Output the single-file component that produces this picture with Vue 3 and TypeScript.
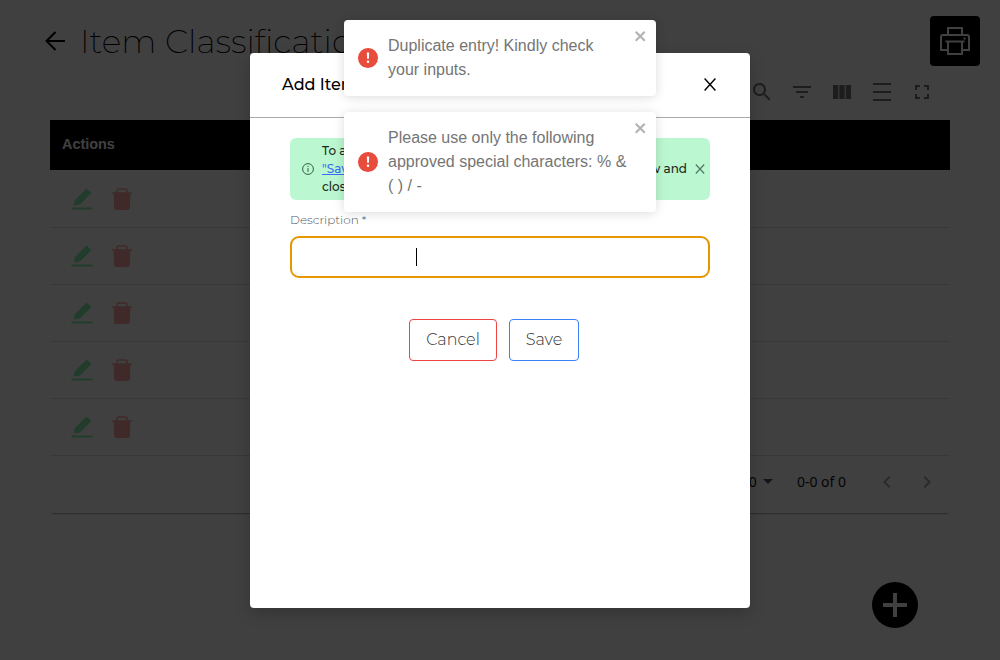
<script setup lang="ts">
interface Toast {
  id: number
  message: string
}

const rows: number[] = [1, 2, 3, 4, 5]

const toolbar: { name: string; path: string }[] = [
  {
    name: 'search',
    path: 'M15.5 14h-.79l-.28-.27C15.41 12.59 16 11.11 16 9.5 16 5.91 13.09 3 9.5 3S3 5.91 3 9.5 5.91 16 9.5 16c1.61 0 3.09-.59 4.23-1.57l.27.28v.79l5 4.99L20.49 19l-4.99-5zm-6 0C7.01 14 5 11.99 5 9.5S7.01 5 9.5 5 14 7.01 14 9.5 11.99 14 9.5 14z',
  },
  { name: 'filter', path: 'M10 18h4v-2h-4v2zM3 6v2h18V6H3zm3 7h12v-2H6v2z' },
  { name: 'columns', path: 'M3 5h5.3v14H3zM9.3 5h5.4v14H9.3zM15.7 5H21v14h-5.300z' },
  { name: 'density', path: 'M3 3h18v2H3zM3 11h18v2H3zM3 19h18v2H3z' },
  {
    name: 'fullscreen',
    path: 'M7 14H5v5h5v-2H7v-3zm-2-4h2V7h3V5H5v5zm12 7h-3v2h5v-5h-2v3zM14 5v2h3v3h2V5h-5z',
  },
]

const toasts: Toast[] = [
  { id: 1, message: 'Duplicate entry! Kindly check your inputs.' },
  { id: 2, message: 'Please use only the following approved special characters: % & ( ) / -' },
]
</script>

<template>
  <div class="app">
    <main class="page">
      <header class="page-head">
        <svg class="back" viewBox="0 0 20 20">
          <path d="M20 10H1.200M10.500 1L1.500 10L10.500 19" fill="none" stroke="#000" stroke-width="2" />
        </svg>
        <h1>Item Classifications</h1>
        <button class="print">
          <svg width="32" height="32" viewBox="0 0 32 32" fill="none" stroke="#fff" stroke-width="2">
            <path d="M9 10V3h14v7M8 25H2V12q0-2 2-2h24q2 0 2 2v13h-6M9 16.500h14V29H9zM6.500 16.500h19" />
            <path d="M24.500 13.500h2" />
          </svg>
        </button>
      </header>

      <div class="toolbar">
        <svg v-for="t in toolbar" :key="t.name" width="24" height="24" viewBox="0 0 24 24">
          <path :d="t.path" fill="#757575" />
        </svg>
      </div>

      <section class="table">
        <div class="thead">Actions</div>
        <div v-for="r in rows" :key="r" class="row">
          <svg width="22" height="22" viewBox="0 0 22 22" fill="#86efac">
            <path d="M3.500 12.500L15.500 0.500L20.500 5L9 16.500L3 17.500z" />
            <path d="M0.500 19.500h21v2h-21z" />
          </svg>
          <svg width="20" height="22" viewBox="0 0 20 22">
            <path d="M5 5V2.500Q5 1 6.500 1h7Q15 1 15 2.500V5" fill="none" stroke="#fca5a5" stroke-width="1.600" />
            <path d="M0 4.200h20v1.600h-1.600l-.5 14.200q-.1 2-2 2H4.100q-1.900 0-2-2L1.600 5.800H0z" fill="#fca5a5" />
          </svg>
        </div>
        <footer class="pager">
          <span class="size">10</span>
          <svg class="caret" width="10" height="5" viewBox="0 0 10 5"><path d="M0 0h10L5 5z" fill="#555" /></svg>
          <span class="range">0-0 of 0</span>
          <svg class="prev" width="24" height="24" viewBox="0 0 24 24">
            <path d="M15.410 7.410L14 6l-6 6 6 6 1.410-1.410L10.830 12z" fill="#aaa" />
          </svg>
          <svg width="24" height="24" viewBox="0 0 24 24">
            <path d="M10 6L8.590 7.410 13.170 12l-4.580 4.590L10 18l6-6z" fill="#aaa" />
          </svg>
        </footer>
      </section>

      <button class="fab">
        <svg width="24" height="24" viewBox="0 0 24 24"><path d="M12 0v24M0 12h24" stroke="#fff" stroke-width="4" /></svg>
      </button>
    </main>

    <div class="overlay">
      <div class="modal">
        <header class="modal-head">
          <h2>Add Item Classification</h2>
          <svg width="12" height="13" viewBox="0 0 12 13">
            <path d="M.6.5L11.400 12.500M11.400.5L.6 12.500" stroke="#000" stroke-width="1.400" />
          </svg>
        </header>
        <div class="modal-body">
          <div class="notice">
            <svg width="12" height="12" viewBox="0 0 12 12" fill="none" stroke="#37604a">
              <circle cx="6" cy="6" r="5.400" />
              <path d="M6 5v4M6 2.800v1.200" />
            </svg>
            <div class="notice-text">
              <p>To add data, click the</p>
              <p class="spread"><a>"Save"</a><span>button. Click X to cancel window and</span></p>
              <p>close the form.</p>
            </div>
            <svg class="dismiss" width="10" height="10" viewBox="0 0 10 10">
              <path d="M.8.5L9.200 9.500M9.200.5L.8 9.500" stroke="#4b7560" stroke-width="1.100" />
            </svg>
          </div>
          <label>Description *</label>
          <div class="field"><i class="caret-line"></i></div>
          <div class="actions">
            <button class="cancel">Cancel</button>
            <button class="save">Save</button>
          </div>
        </div>
      </div>
    </div>

    <div class="toasts">
      <div v-for="t in toasts" :key="t.id" class="toast">
        <svg class="alert" width="20" height="20" viewBox="0 0 24 24">
          <path
            d="M11.983 0a12.206 12.206 0 00-8.510 3.653A11.800 11.800 0 000 12.207 11.779 11.779 0 0011.800 24h.214A12.111 12.111 0 0024 11.791 11.766 11.766 0 0011.983 0zM10.500 16.542a1.476 1.476 0 011.449-1.530h.027a1.527 1.527 0 011.523 1.470 1.475 1.475 0 01-1.449 1.530h-.027a1.529 1.529 0 01-1.523-1.470zM10.600 5.500h2.800l-.3 7.500h-2.200z"
            fill="#e74c3c"
            fill-rule="evenodd"
          />
        </svg>
        <p>{{ t.message }}</p>
        <svg class="close" width="14" height="16" viewBox="0 0 14 16">
          <path
            fill-rule="evenodd"
            fill="#b2b2b2"
            d="M7.710 8.230l3.750 3.750-1.480 1.480-3.750-3.750-3.750 3.750L1 11.980l3.750-3.750L1 4.480 2.480 3l3.750 3.750L9.980 3l1.480 1.480-3.750 3.750z"
          />
        </svg>
      </div>
    </div>
  </div>
</template>

<style>
body {
  margin: 0;
  overflow: hidden;
}
</style>

<style scoped>
* {
  box-sizing: border-box;
}
.app {
  position: relative;
  height: 660px;
  overflow: hidden;
  background: #fff;
  font-family: Montserrat, Lato, "Open Sans", sans-serif;
}
svg {
  display: block;
  flex: none;
}
button {
  display: flex;
  align-items: center;
  justify-content: center;
  padding: 0;
  border: 0;
  font-family: inherit;
}
h1, h2, p {
  margin: 0;
}
.page {
  height: 660px;
  padding: 16px 20px 0 45px;
}
.page-head {
  display: flex;
  height: 50px;
  align-items: center;
}
.back {
  width: 20px;
  height: 20px;
  margin-right: 15px;
}
h1 {
  flex: 1;
  font-size: 33px;
  line-height: 40px;
  font-weight: 200;
  white-space: nowrap;
}
.print {
  width: 50px;
  height: 50px;
  border-radius: 4px;
  background: #000;
}
.toolbar {
  display: flex;
  justify-content: flex-end;
  gap: 16px;
  padding: 14px 46px 0 0;
}
.table {
  width: 900px;
  height: 393px;
  margin: 16px 0 0 5px;
  box-shadow: 0 2px 2px -2px rgba(0, 0, 0, 0.9);
}
.thead {
  height: 50px;
  margin-bottom: 1px;
  padding-left: 12px;
  background: #000;
  color: #fff;
  font: bold 14.400px/48px "Liberation Sans", Arial, sans-serif;
}
.row {
  display: flex;
  height: 57px;
  align-items: center;
  gap: 19px;
  padding-left: 21px;
  border-bottom: 1px solid #e0e0e0;
}
.pager {
  display: flex;
  height: 53px;
  align-items: center;
  justify-content: flex-end;
  padding: 0 11px 2px 0;
  color: #111;
  font: 14px/20px "Noto Sans", sans-serif;
}
.caret {
  margin: 0 24px 0 6px;
}
.range {
  margin-right: 29px;
}
.prev {
  margin-right: 16px;
}
.fab {
  width: 46px;
  height: 46px;
  margin: 69px 0 0 827px;
  border-radius: 50%;
  background: #000;
}
.overlay {
  position: absolute;
  inset: 0;
  display: flex;
  justify-content: center;
  padding-top: 53px;
  background: rgba(0, 0, 0, 0.75);
}
.modal {
  width: 500px;
  height: 555px;
  border-radius: 4px;
  background: #fff;
  box-shadow: 0 5px 15px rgba(0, 0, 0, 0.2);
}
.modal-head {
  display: flex;
  height: 65px;
  align-items: center;
  justify-content: space-between;
  padding: 0 34px 1px 32px;
  border-bottom: 1px solid #aaa;
}
h2 {
  font-size: 16px;
  line-height: 24px;
  font-weight: 500;
}
.modal-body {
  padding: 20px 40px 0;
}
.notice {
  display: flex;
  height: 62px;
  align-items: center;
  padding: 0 5px 0 12px;
  border-radius: 6px;
  background: #bbf7d0;
  color: #1c2921;
  font-size: 12px;
  line-height: 18px;
  font-weight: 500;
}
.notice-text {
  flex: 1;
  margin: 0 8px;
  white-space: nowrap;
}
.spread {
  display: flex;
  justify-content: space-between;
}
.notice a {
  color: #3b6cf6;
  text-decoration: underline;
}
label {
  display: block;
  height: 36px;
  padding-top: 11px;
  color: #4b5563;
  font-size: 12px;
  line-height: 18px;
  font-weight: 300;
}
.field {
  display: flex;
  height: 42px;
  align-items: center;
  padding-left: 124px;
  border: 2px solid #e59700;
  border-radius: 9px;
}
.caret-line {
  width: 1px;
  height: 18px;
  background: #000;
}
.actions {
  display: flex;
  gap: 12px;
  margin: 41px 0 0 119px;
}
.actions button {
  height: 42px;
  padding-bottom: 1px;
  border: 1px solid #ef4444;
  border-radius: 4px;
  background: #fff;
  color: #333;
  font-size: 16px;
  font-weight: 300;
}
.actions .cancel {
  width: 88px;
}
.actions .save {
  width: 70px;
  border-color: #3b82f6;
}
.toasts {
  position: absolute;
  top: 20px;
  left: 344px;
  display: grid;
  gap: 16px;
  width: 312px;
}
.toast {
  display: flex;
  padding: 14px 8px 14px 14px;
  border-radius: 4px;
  background: #fff;
  color: #757575;
  font: 16px/24px "Liberation Sans", Arial, sans-serif;
  box-shadow: 0 1px 10px rgba(0, 0, 0, 0.1), 0 2px 15px rgba(0, 0, 0, 0.05);
}
.alert {
  align-self: center;
  margin-right: 10px;
}
.toast p {
  flex: 1;
  padding-right: 6px;
}
.close {
  margin-top: -6px;
}
</style>
